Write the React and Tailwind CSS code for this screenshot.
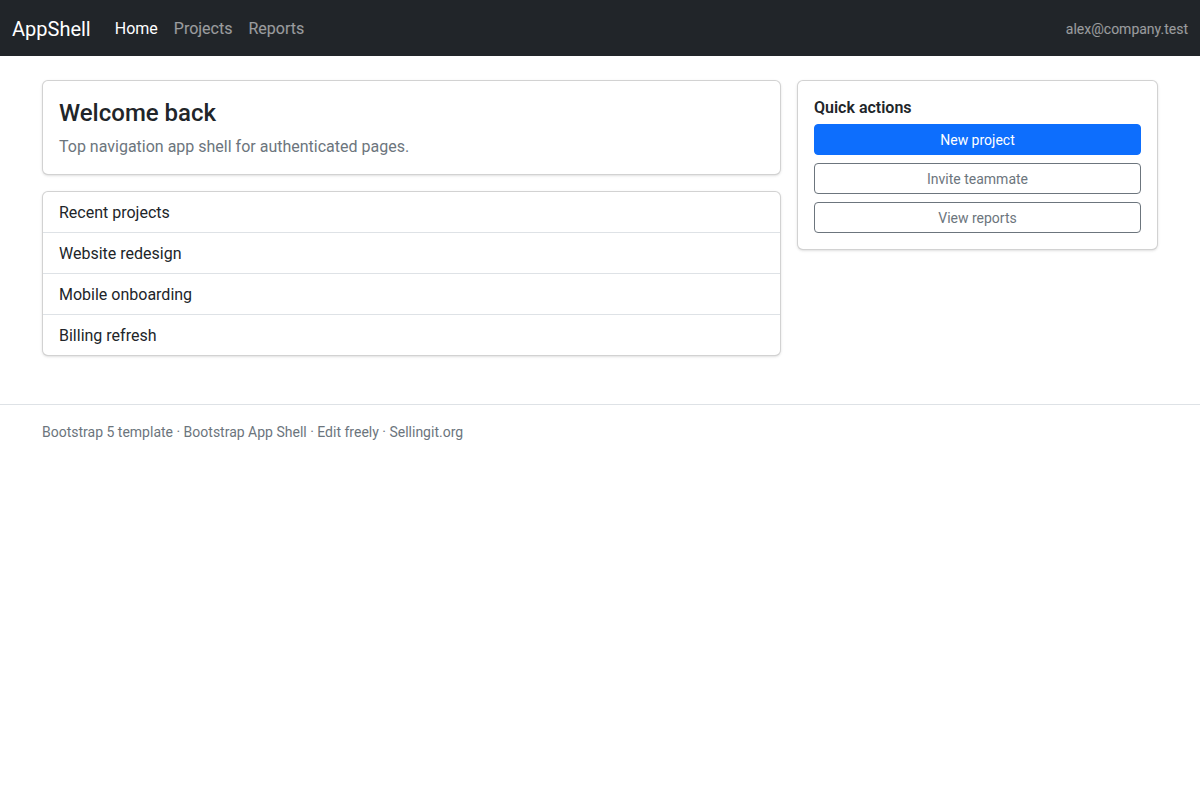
import React from 'react'

const projects = ['Website redesign', 'Mobile onboarding', 'Billing refresh']

function Navbar(){
  return (
    <nav className="bg-[#212529] h-14 px-3 flex items-center pt-px">
      <a href="#" className="text-white text-xl leading-[30px] mr-4">AppShell</a>
      <ul className="flex items-center">
        <li><a href="#" className="block px-2 py-2 text-white">Home</a></li>
        <li><a href="#" className="block px-2 py-2 text-white/55">Projects</a></li>
        <li><a href="#" className="block px-2 py-2 text-white/55">Reports</a></li>
      </ul>
      <span className="ml-auto text-sm text-white/55">alex@company.test</span>
    </nav>
  )
}

export default function App(){
  return (
    <div className="min-h-screen bg-white text-[#212529] text-base leading-6 font-['Roboto',sans-serif]">
      <Navbar />
      <main className="max-w-[1140px] mx-auto px-3 py-6">
        <div className="grid grid-cols-[1fr_361px] gap-4 items-start">
          <div className="flex flex-col gap-4">
            <div className="border border-black/[0.175] rounded-md bg-white shadow-sm px-4 pt-4 pb-[15px]">
              <h1 className="text-2xl leading-[1.2] font-medium pt-[2px] mb-[7px]">Welcome back</h1>
              <p className="text-[#6c757d]">Top navigation app shell for authenticated pages.</p>
            </div>
            <ul className="border border-black/[0.175] rounded-md bg-white shadow-sm">
              <li className="px-4 pt-[9px] pb-[7px]">Recent projects</li>
              {projects.map(p => (
                <li key={p} className="px-4 pt-[9px] pb-[7px] border-t border-[#dee2e6]">{p}</li>
              ))}
            </ul>
          </div>
          <div className="border border-black/[0.175] rounded-md bg-white shadow-sm p-4">
            <h2 className="text-base leading-[1.2] font-semibold pt-px mb-[7px]">Quick actions</h2>
            <div className="grid gap-2">
              <button className="h-[31px] rounded bg-[#0d6efd] text-white text-sm border border-[#0d6efd]">New project</button>
              <button className="h-[31px] rounded border border-[#6c757d] text-[#6c757d] text-sm">Invite teammate</button>
              <button className="h-[31px] rounded border border-[#6c757d] text-[#6c757d] text-sm">View reports</button>
            </div>
          </div>
        </div>
      </main>
      <footer className="mt-6 border-t border-[#dee2e6] py-4">
        <div className="max-w-[1140px] mx-auto px-3 text-sm leading-[21px] text-[#6c757d] pt-px">
          Bootstrap 5 template · Bootstrap App Shell · Edit freely · Sellingit.org
        </div>
      </footer>
    </div>
  )
}
